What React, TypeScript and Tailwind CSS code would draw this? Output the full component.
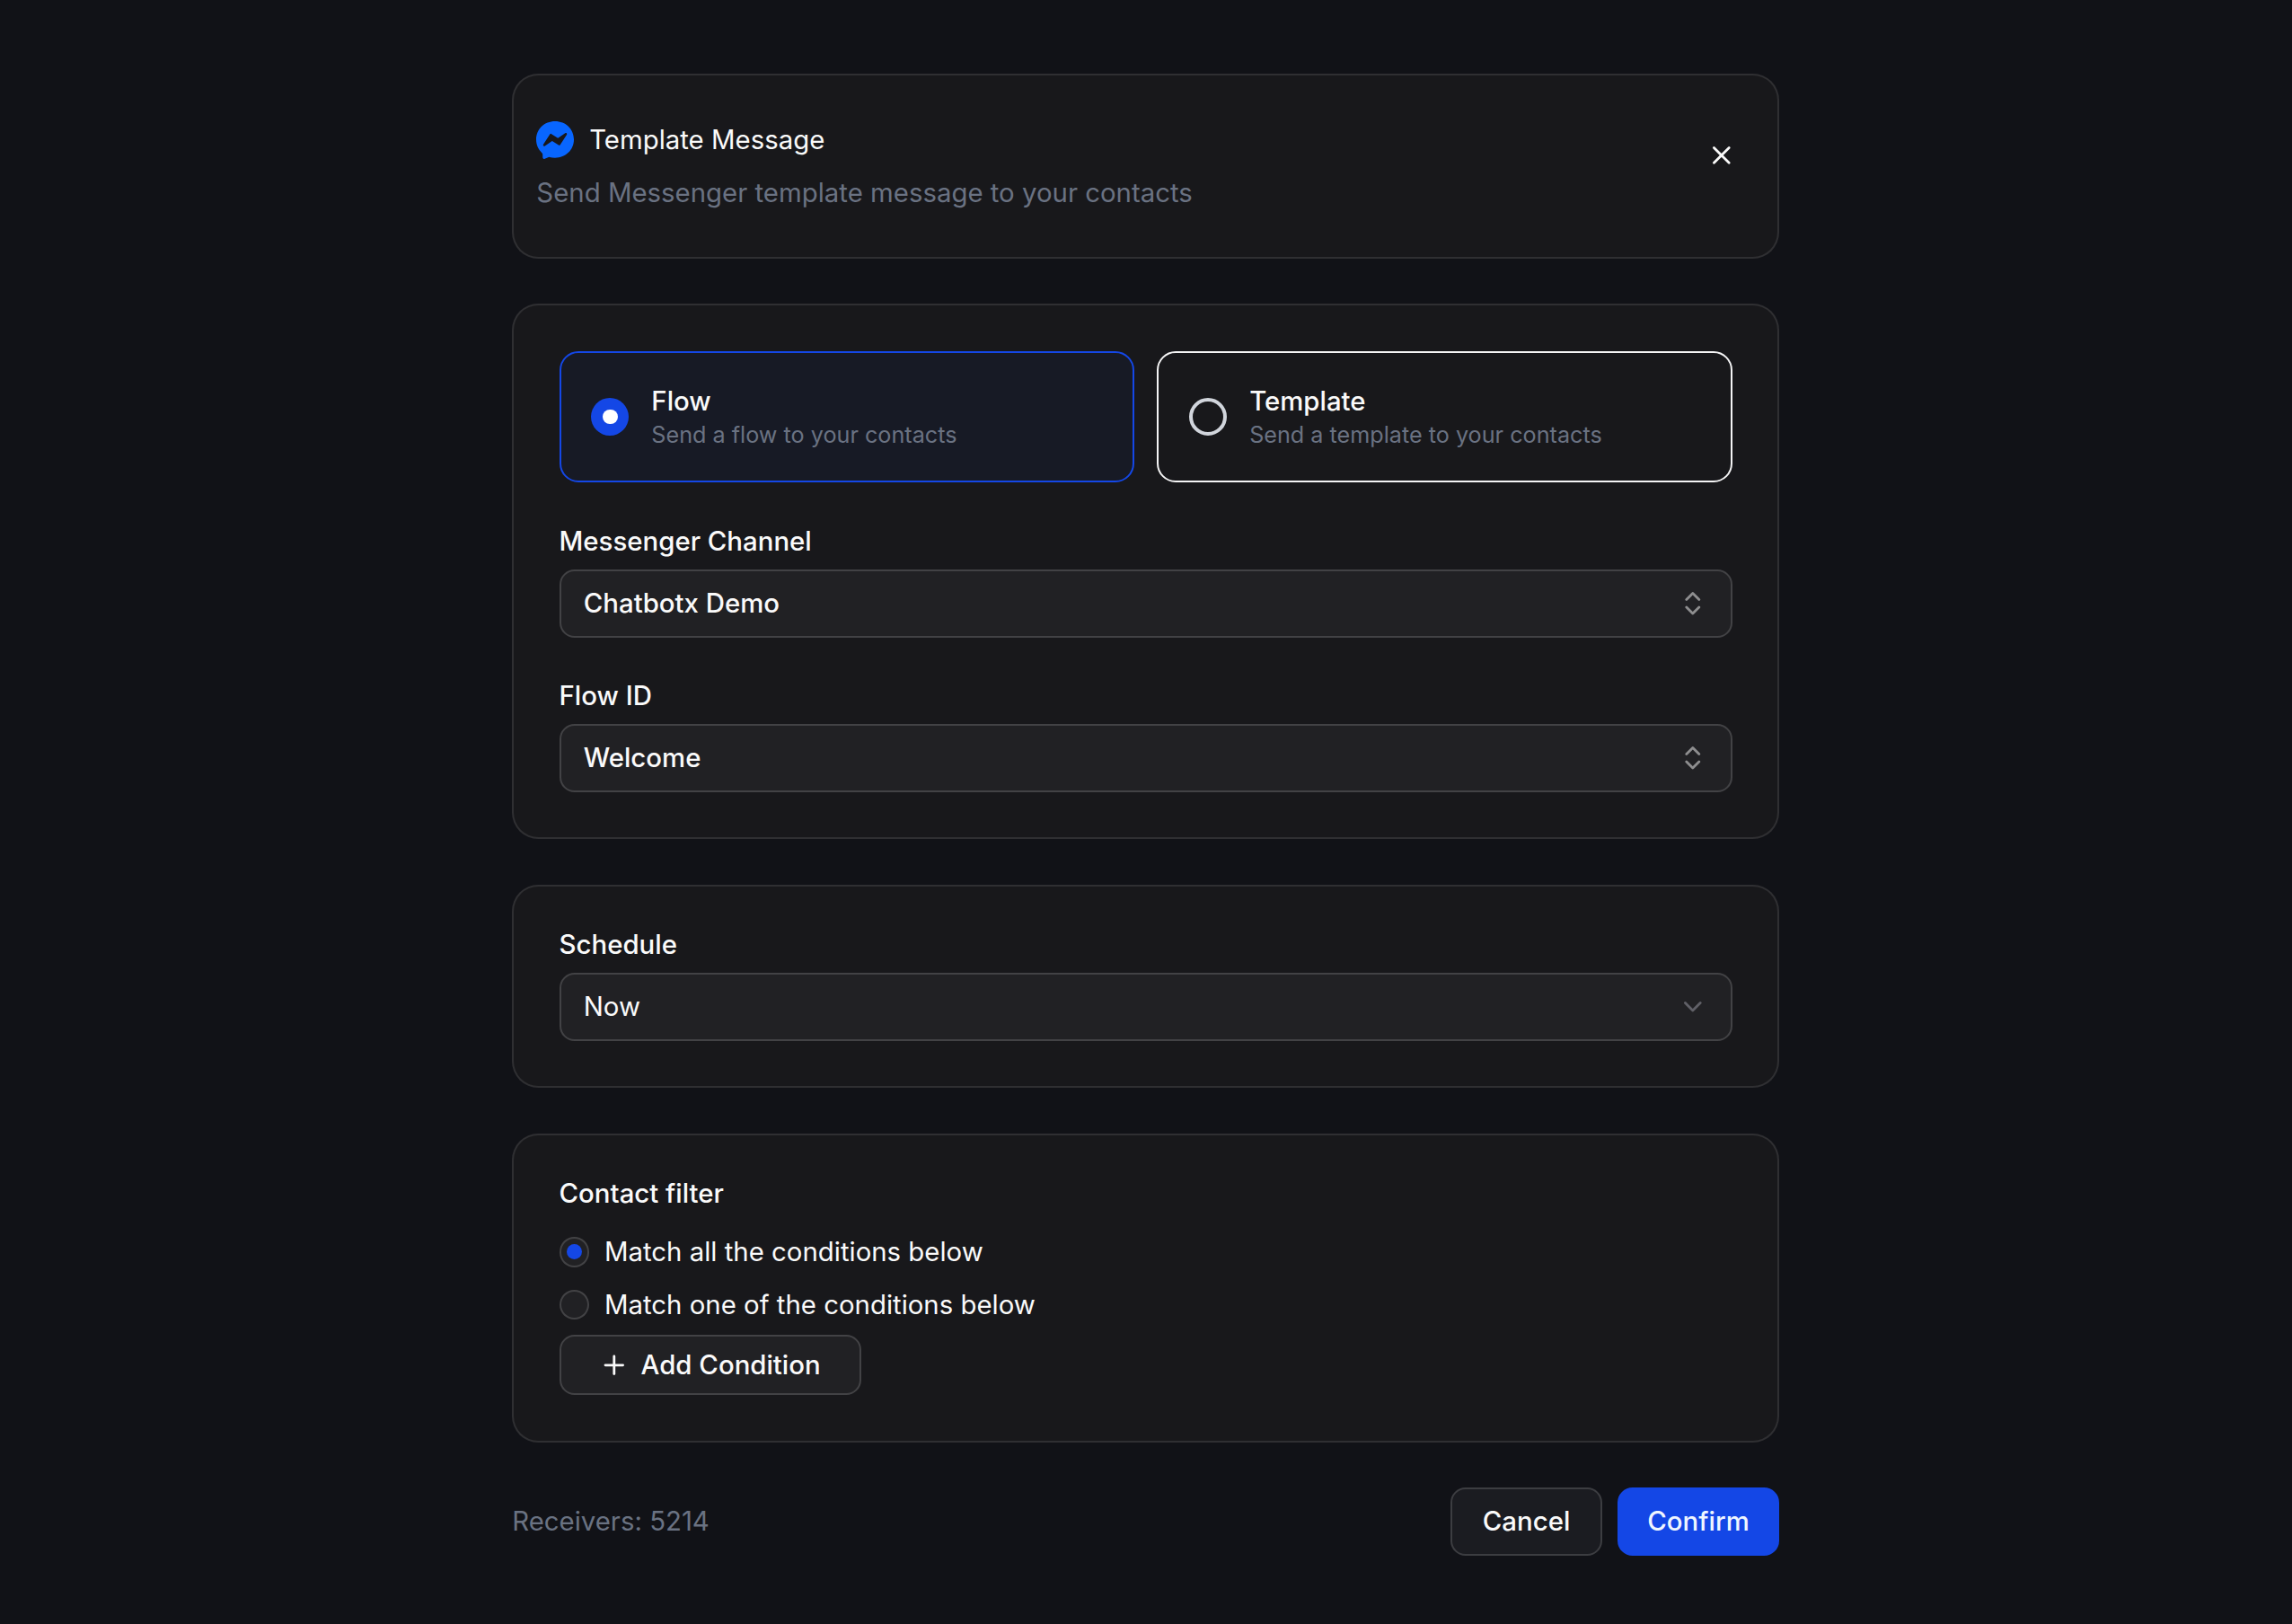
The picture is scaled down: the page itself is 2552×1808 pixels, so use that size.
import type { ReactNode } from "react";
import { ChevronDown, ChevronsUpDown, Plus, X } from "lucide-react";

function MessengerIcon({ className }: { className?: string }) {
  return (
    <svg viewBox="0 0 24 24" fill="currentColor" className={className}>
      <path d="M12 0C5.24 0 0 4.952 0 11.64c0 3.499 1.434 6.521 3.769 8.61a.96.96 0 0 1 .323.683l.065 2.135a.96.96 0 0 0 1.347.85l2.381-1.053a.96.96 0 0 1 .641-.046A13 13 0 0 0 12 23.28c6.76 0 12-4.952 12-11.64S18.76 0 12 0m6.806 7.44c.522-.03.971.567.63 1.094l-4.178 6.457a.707.707 0 0 1-.977.208l-3.87-2.504a.44.44 0 0 0-.49.007l-4.363 3.01c-.637.438-1.415-.317-.995-.966l4.179-6.457a.706.706 0 0 1 .977-.21l3.87 2.505c.15.097.344.094.491-.007l4.362-3.008a.7.7 0 0 1 .364-.13" />
    </svg>
  );
}

function Card({ children }: { children: ReactNode }) {
  return (
    <section className="rounded-[14px] border border-white/10 bg-[#18181b] p-6">{children}</section>
  );
}

function ModeOption({
  title,
  description,
  selected = false,
}: {
  title: string;
  description: string;
  selected?: boolean;
}) {
  return (
    <div
      className={
        selected
          ? "flex flex-1 items-center gap-3 rounded-[10px] border border-[#1447e6] bg-[#1447e6]/5 p-4"
          : "flex flex-1 items-center gap-3 rounded-[10px] border border-[#f4f4f5] p-4"
      }
    >
      {selected ? (
        <span className="flex size-5 items-center justify-center rounded-full bg-[#1447e6]">
          <span className="size-2 rounded-full bg-white" />
        </span>
      ) : (
        <span className="size-5 rounded-full border-2 border-gray-300" />
      )}
      <div>
        <div className="text-sm font-medium">{title}</div>
        <div className="text-xs text-gray-500">{description}</div>
      </div>
    </div>
  );
}

function Field({ label, children }: { label: string; children: ReactNode }) {
  return (
    <div className="flex flex-col gap-2">
      <div className="text-sm leading-none font-medium">{label}</div>
      {children}
    </div>
  );
}

function Combobox({ value }: { value: string }) {
  return (
    <button className="flex h-9 w-full items-center justify-between rounded-lg border border-white/15 bg-white/[0.045] px-3 text-sm font-medium">
      {value}
      <ChevronsUpDown className="size-4 opacity-50" />
    </button>
  );
}

function RadioRow({ label, checked = false }: { label: string; checked?: boolean }) {
  return (
    <div className="flex items-center gap-2">
      <span className="flex size-4 items-center justify-center rounded-full border border-white/15 bg-white/[0.045]">
        {checked && <span className="size-2 rounded-full bg-[#1447e6]" />}
      </span>
      <span className="text-sm leading-none">{label}</span>
    </div>
  );
}

export default function App() {
  return (
    <div className="min-h-screen bg-[#111217] pr-[0.5px] font-['Inter',sans-serif] text-[#fafafa]">
      <main className="mx-auto flex w-[672px] flex-col gap-6 pt-[39.2px] [zoom:2.1]">
        <header className="flex items-start justify-between rounded-[14px] border border-white/10 bg-[#18181b] px-3 py-6">
          <div className="flex flex-col gap-2">
            <div className="flex items-center gap-2">
              <MessengerIcon className="size-5 text-[#0866ff]" />
              <h1 className="text-sm">Template Message</h1>
            </div>
            <p className="text-sm text-gray-500">
              Send Messenger template message to your contacts
            </p>
          </div>
          <button className="flex size-9 items-center justify-center">
            <X className="size-4" />
          </button>
        </header>

        <Card>
          <div className="flex flex-col gap-6">
            <div className="flex gap-3">
              <ModeOption title="Flow" description="Send a flow to your contacts" selected />
              <ModeOption title="Template" description="Send a template to your contacts" />
            </div>
            <Field label="Messenger Channel">
              <Combobox value="Chatbotx Demo" />
            </Field>
            <Field label="Flow ID">
              <Combobox value="Welcome" />
            </Field>
          </div>
        </Card>

        <Card>
          <Field label="Schedule">
            <button className="flex h-9 w-full items-center justify-between rounded-lg border border-white/15 bg-white/[0.045] px-3 text-sm">
              Now
              <ChevronDown className="size-4 text-[#9f9fa9] opacity-50" />
            </button>
          </Field>
        </Card>

        <Card>
          <div className="text-sm leading-none font-medium">Contact filter</div>
          <div className="mt-4 mb-2 flex flex-col gap-3">
            <RadioRow label="Match all the conditions below" checked />
            <RadioRow label="Match one of the conditions below" />
          </div>
          <button className="flex h-8 w-40 items-center justify-center gap-1.5 rounded-lg border border-white/15 bg-white/[0.045] text-sm font-medium">
            <Plus className="size-4" />
            Add Condition
          </button>
        </Card>

        <footer className="flex items-center justify-between text-sm">
          <span className="text-gray-500">Receivers: 5214</span>
          <div className="flex gap-2 font-medium">
            <button className="h-9 rounded-lg border border-white/15 bg-white/[0.045] px-4">
              Cancel
            </button>
            <button className="h-9 rounded-lg bg-[#1447e6] px-4 text-blue-50">Confirm</button>
          </div>
        </footer>
      </main>
    </div>
  );
}
